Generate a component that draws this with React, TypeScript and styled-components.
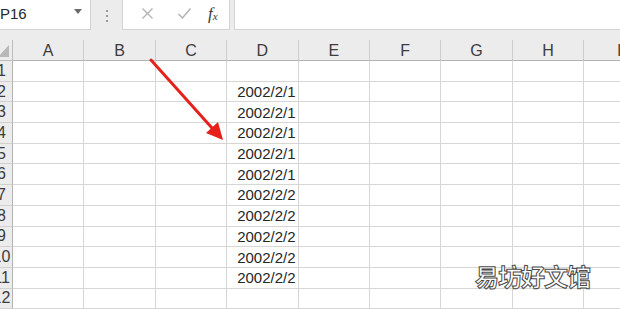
import React from "react";
import styled, { createGlobalStyle } from "styled-components";

const COLS = ["A", "B", "C", "D", "E", "F", "G", "H", "I"];
const DATES: Record<number, string> = {
    2: "2002/2/1",
    3: "2002/2/1",
    4: "2002/2/1",
    5: "2002/2/1",
    6: "2002/2/1",
    7: "2002/2/2",
    8: "2002/2/2",
    9: "2002/2/2",
    10: "2002/2/2",
    11: "2002/2/2",
};
const ROWS = Array.from({ length: 12 }, (_, i) => i + 1);

export default function App() {
    return (
        <Page>
            <GlobalStyle />
            <Toolbar>
                <NameBox>
                    <span>P16</span>
                    <DropCaret />
                </NameBox>
                <Grip>
                    <i />
                    <i />
                    <i />
                </Grip>
                <ButtonGroup>
                    <ToolButton>
                        <svg width="13" height="13" viewBox="0 0 13 13">
                            <path d="M1.5 1.5 L11.5 11.5 M11.5 1.5 L1.5 11.5" stroke="#b3b3b3" strokeWidth="1.4" fill="none" />
                        </svg>
                    </ToolButton>
                    <ToolButton>
                        <svg width="15" height="13" viewBox="0 0 15 13">
                            <path d="M1.5 7 L5.5 11 L13.5 1.5" stroke="#b3b3b3" strokeWidth="1.5" fill="none" />
                        </svg>
                    </ToolButton>
                    <FxLabel>
                        f<sub>x</sub>
                    </FxLabel>
                </ButtonGroup>
                <FormulaInput />
            </Toolbar>
            <Sheet>
                <Corner>
                    <CornerMark />
                </Corner>
                {COLS.map((c) => (
                    <ColHead key={c}>{c}</ColHead>
                ))}
                {ROWS.map((r) => (
                    <React.Fragment key={r}>
                        <RowHead>{r}</RowHead>
                        {COLS.map((c) => (
                            <Cell key={c}>{c === "D" ? DATES[r] ?? "" : ""}</Cell>
                        ))}
                    </React.Fragment>
                ))}
            </Sheet>
            <Arrow width="620" height="309" viewBox="0 0 620 309">
                <line x1="151" y1="60" x2="212" y2="128" stroke="#e5211c" strokeWidth="3" strokeLinecap="round" />
                <polygon points="223,140 206,133 218,122" fill="#e5211c" />
            </Arrow>
            <Watermark>易坊好文馆</Watermark>
        </Page>
    );
}

const GlobalStyle = createGlobalStyle`
    html, body {
        margin: 0;
        padding: 0;
        background: #ffffff;
        overflow: hidden;
    }
    body {
        font-family: "Liberation Sans", Arial, sans-serif;
    }
`;

const Page = styled.div`
    position: relative;
    width: 620px;
    height: 309px;
    overflow: hidden;
    background: #ffffff;
`;

const Toolbar = styled.div`
    display: flex;
    align-items: flex-start;
    height: 40px;
    margin-left: -9px;
    background: #ececec;
`;

const NameBox = styled.div`
    display: flex;
    align-items: center;
    justify-content: space-between;
    box-sizing: border-box;
    width: 100px;
    height: 30px;
    padding: 0 8px 2px 8px;
    background: #ffffff;
    border: 1px solid #d2d2d2;
    border-top: none;
    font-size: 15px;
    color: #262626;
`;

const DropCaret = styled.div`
    width: 0;
    height: 0;
    margin-bottom: 4px;
    border-left: 4px solid transparent;
    border-right: 4px solid transparent;
    border-top: 5px solid #6a6a6a;
`;

const Grip = styled.div`
    display: flex;
    flex-direction: column;
    align-items: center;
    gap: 3px;
    width: 31px;
    padding-top: 10px;
    i {
        display: block;
        width: 2px;
        height: 2px;
        background: #9a9a9a;
    }
`;

const ButtonGroup = styled.div`
    display: flex;
    align-items: center;
    justify-content: space-around;
    box-sizing: border-box;
    width: 108px;
    height: 30px;
    padding: 0 6px 2px 6px;
    background: #ffffff;
    border: 1px solid #d2d2d2;
    border-top: none;
`;

const ToolButton = styled.div`
    display: flex;
    align-items: center;
    justify-content: center;
    width: 26px;
`;

const FxLabel = styled.div`
    font-family: "Liberation Serif", "Times New Roman", serif;
    font-style: italic;
    font-size: 17px;
    color: #3a3a3a;
    sub {
        font-size: 11px;
        vertical-align: -1px;
    }
`;

const FormulaInput = styled.div`
    flex: 1;
    box-sizing: border-box;
    height: 30px;
    margin-left: 4px;
    background: #ffffff;
    border: 1px solid #d2d2d2;
    border-top: none;
    border-right: none;
`;

const Sheet = styled.div`
    display: grid;
    grid-template-columns: 22px repeat(9, 71.4px);
    grid-template-rows: 21px;
    grid-auto-rows: 20.7px;
    margin-left: -9px;
`;

const Corner = styled.div`
    position: relative;
    box-sizing: border-box;
    background: #ececec;
    border-right: 1px solid #bdbdbd;
    border-bottom: 1px solid #bdbdbd;
`;

const CornerMark = styled.div`
    position: absolute;
    right: 3px;
    bottom: 3px;
    width: 0;
    height: 0;
    border-left: 11px solid transparent;
    border-bottom: 12px solid #b8b8b8;
`;

const ColHead = styled.div`
    display: flex;
    align-items: center;
    justify-content: center;
    box-sizing: border-box;
    padding-top: 2px;
    background: #ececec;
    border-right: 1px solid #cdcdcd;
    border-bottom: 1px solid #b3b3b3;
    font-size: 16px;
    color: #3c3c3c;
`;

const RowHead = styled.div`
    display: flex;
    align-items: center;
    justify-content: center;
    box-sizing: border-box;
    background: #ececec;
    border-right: 1px solid #b3b3b3;
    border-bottom: 1px solid #d0d0d0;
    font-size: 16px;
    color: #3c3c3c;
`;

const Cell = styled.div`
    display: flex;
    align-items: center;
    justify-content: flex-end;
    box-sizing: border-box;
    padding-right: 2px;
    border-right: 1px solid #d6d6d6;
    border-bottom: 1px solid #d6d6d6;
    font-size: 15px;
    color: #262626;
    white-space: nowrap;
`;

const Arrow = styled.svg`
    position: absolute;
    left: 0;
    top: 0;
    pointer-events: none;
`;

const Watermark = styled.div`
    position: absolute;
    right: 30px;
    bottom: 16px;
    font-family: "Noto Sans CJK SC", sans-serif;
    font-size: 24px;
    font-weight: 700;
    letter-spacing: -1px;
    color: #ffffff;
    -webkit-text-stroke: 1px #4a4a4a;
`;
